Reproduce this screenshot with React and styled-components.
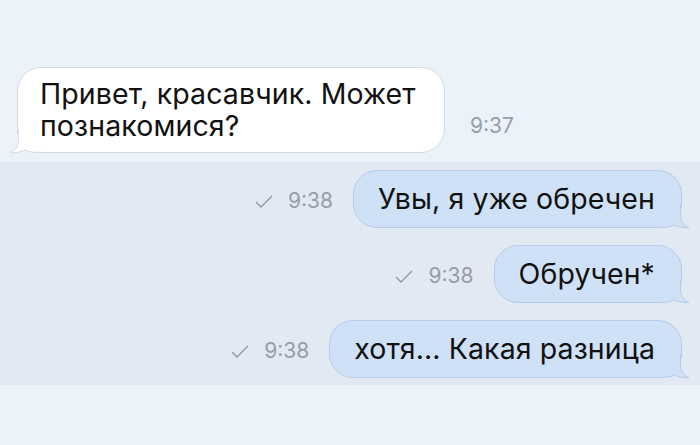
import React from 'react';
import styled, { createGlobalStyle } from 'styled-components';

const GlobalStyle = createGlobalStyle`
  html, body {
    margin: 0;
    padding: 0;
    background: #ecf2fa;
  }
  body {
    font-family: Inter, "Noto Sans", "Liberation Sans", sans-serif;
    -webkit-font-smoothing: antialiased;
  }
`;

const Screen = styled.div`
  width: 700px;
  height: 445px;
  overflow: hidden;
  background: #ecf2fa;
  padding-top: 67px;
  box-sizing: border-box;
`;

const Row = styled.div`
  display: flex;
  align-items: flex-end;
  justify-content: ${(p) => (p.$out ? 'flex-end' : 'flex-start')};
  gap: ${(p) => (p.$out ? '20px' : '25px')};
  padding: ${(p) => (p.$out ? '0 18px 0 0' : '0 0 0 17px')};
`;

const UnreadBlock = styled.div`
  margin-top: 9px;
  background: #e3e9f3;
  padding: 8px 0 7px;
  display: flex;
  flex-direction: column;
  gap: 17px;
`;

const Bubble = styled.div`
  position: relative;
  box-sizing: border-box;
  max-width: ${(p) => (p.$out ? '400px' : '428px')};
  padding: ${(p) => (p.$out ? '12px 26px 12px 24px' : '10px 22px 10px 22px')};
  border-radius: 24px;
  background: ${(p) => (p.$out ? '#cfe1f7' : '#ffffff')};
  border: 1px solid ${(p) => (p.$out ? '#b7cce8' : '#d3dbe5')};
  color: #111;
  font-size: 28.5px;
  line-height: 32px;
  letter-spacing: 0.1px;
`;

const BubbleText = styled.span`
  position: relative;
  z-index: 1;
`;

const TailSvg = styled.svg`
  position: absolute;
  bottom: -1px;
  ${(p) => (p.$out ? 'right: -9px;' : 'left: -9px; transform: scaleX(-1);')}
  overflow: visible;
`;

const Meta = styled.div`
  display: flex;
  align-items: center;
  gap: 15px;
  margin-bottom: 15px;
  color: #959eaa;
  font-size: 21px;
  line-height: 24px;
`;

const Tail = ({ out }) => {
  const fill = out ? '#cfe1f7' : '#ffffff';
  const stroke = out ? '#b7cce8' : '#d3dbe5';
  return (
    <TailSvg $out={out} width="34" height="24" viewBox="0 0 34 24">
      <path
        d="M0 0 H24.5 V10 C24.5 17 27.5 21.5 33 23.5 C28 24.3 22.5 23 18.5 21 C14.5 23 10 23.5 0 23.5 Z"
        fill={fill}
      />
      <path
        d="M24.5 0 V10 C24.5 17 27.5 21.5 33 23.5 C28 24.3 22.5 23 18.5 21 C14.5 23 10 23.5 0 23.5"
        fill="none"
        stroke={stroke}
        strokeWidth="1"
      />
    </TailSvg>
  );
};

const Check = () => (
  <svg width="18" height="13" viewBox="0 0 18 13">
    <polyline points="1,7 6,12 17,1" fill="none" stroke="#8f98a3" strokeWidth="1.4" />
  </svg>
);

const outgoing = [
  { id: 1, text: 'Увы, я уже обречен', time: '9:38' },
  { id: 2, text: 'Обручен*', time: '9:38' },
  { id: 3, text: 'хотя... Какая разница', time: '9:38' },
];

export default function App() {
  return (
    <Screen>
      <GlobalStyle />
      <Row>
        <Bubble>
          <Tail />
          <BubbleText>Привет, красавчик. Может познакомися?</BubbleText>
        </Bubble>
        <Meta>9:37</Meta>
      </Row>
      <UnreadBlock>
        {outgoing.map((m) => (
          <Row $out key={m.id}>
            <Meta>
              <Check />
              {m.time}
            </Meta>
            <Bubble $out>
              <Tail out />
              <BubbleText>{m.text}</BubbleText>
            </Bubble>
          </Row>
        ))}
      </UnreadBlock>
    </Screen>
  );
}
